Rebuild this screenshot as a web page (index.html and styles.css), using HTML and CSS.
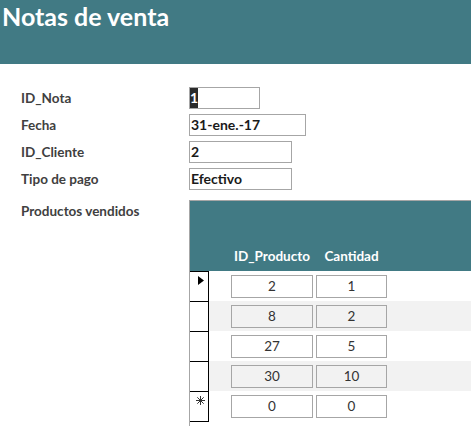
FILE: index.html
```html
<!DOCTYPE html>
<html lang="es">
<head>
<meta charset="utf-8">
<title>Notas de venta</title>
<link rel="stylesheet" href="styles.css">
</head>
<body>
<header class="title-bar">
  <h1 class="title">Notas de venta</h1>
</header>
<main class="form">
  <div class="fields">
    <div class="label">ID_Nota</div>
    <div class="box box-id"><span class="sel">1</span></div>
    <div class="label">Fecha</div>
    <div class="box box-date">31-ene.-17</div>
    <div class="label">ID_Cliente</div>
    <div class="box box-mid">2</div>
    <div class="label">Tipo de pago</div>
    <div class="box box-mid">Efectivo</div>
  </div>
  <div class="sub-row">
    <div class="label sub-label">Productos vendidos</div>
    <div class="subform">
      <div class="sub-head">
        <span class="hcol hcol1">ID_Producto</span>
        <span class="hcol hcol2">Cantidad</span>
      </div>
      <div class="rec">
        <div class="selector">
          <svg class="arrow" width="6" height="9" viewBox="0 0 6 9"><polygon points="0,0 6,4.5 0,9" fill="#000"/></svg>
        </div>
        <div class="cell c1">2</div>
        <div class="cell c2">1</div>
      </div>
      <div class="rec alt">
        <div class="selector"></div>
        <div class="cell c1">8</div>
        <div class="cell c2">2</div>
      </div>
      <div class="rec">
        <div class="selector"></div>
        <div class="cell c1">27</div>
        <div class="cell c2">5</div>
      </div>
      <div class="rec alt">
        <div class="selector"></div>
        <div class="cell c1">30</div>
        <div class="cell c2">10</div>
      </div>
      <div class="rec last">
        <div class="selector">
          <svg class="star" width="9" height="9" viewBox="0 0 9 9"><g stroke="#333" stroke-width="1"><line x1="4.5" y1="0" x2="4.5" y2="9"/><line x1="0" y1="4.5" x2="9" y2="4.5"/><line x1="1.3" y1="1.3" x2="7.7" y2="7.7"/><line x1="7.7" y1="1.3" x2="1.3" y2="7.7"/></g></svg>
        </div>
        <div class="cell c1">0</div>
        <div class="cell c2">0</div>
      </div>
    </div>
  </div>
</main>
</body>
</html>
```
FILE: styles.css
```css
html, body {
  margin: 0;
  padding: 0;
  overflow: hidden;
  background: #fff;
}
body {
  width: 471px;
  font-family: Lato, "Open Sans", sans-serif;
}
.title-bar {
  height: 64px;
  background: #417a84;
  box-sizing: border-box;
  padding: 1px 0 0 2px;
}
.title {
  margin: 0;
  font-size: 25px;
  line-height: 30px;
  font-weight: 700;
  color: #fff;
}
.form {
  padding: 23px 0 0 21px;
}
.fields {
  display: grid;
  grid-template-columns: 168px auto;
  grid-auto-rows: 22px;
  row-gap: 5px;
  justify-items: start;
}
.label {
  font-size: 13.5px;
  line-height: 22px;
  font-weight: 700;
  color: #404040;
}
.box {
  box-sizing: border-box;
  height: 22px;
  border: 1px solid #a6a6a6;
  font-size: 14px;
  line-height: 20px;
  font-weight: 700;
  color: #1a1a1a;
  padding-left: 1px;
  white-space: nowrap;
}
.box-id { width: 71px; padding-left: 0; }
.box-date { width: 117px; }
.box-mid { width: 103px; }
.sel {
  display: inline-block;
  width: 8px;
  height: 20px;
  background: #2b2b2b;
  color: #fff;
  text-align: center;
}
.sub-row {
  display: flex;
  margin-top: 10px;
  align-items: flex-start;
}
.sub-label {
  width: 168px;
  flex: none;
}
.subform {
  width: 300px;
  flex: none;
  border-top: 1px solid #a6a6a6;
  border-left: 1px solid #a6a6a6;
  padding-bottom: 20px;
}
.sub-head {
  height: 70px;
  box-sizing: border-box;
  background: #417a84;
  display: flex;
  align-items: flex-end;
  gap: 3px;
  padding: 0 0 7px 41px;
}
.hcol {
  font-size: 13.5px;
  line-height: 16px;
  font-weight: 700;
  color: #fff;
  text-align: center;
  white-space: nowrap;
}
.hcol1 { width: 82px; }
.hcol2 { width: 71px; }
.rec {
  display: flex;
  align-items: flex-start;
  height: 30px;
  gap: 3px;
}
.rec.alt { background: #f2f2f2; }
.rec.last { height: 31px; }
.selector {
  box-sizing: border-box;
  width: 19px;
  height: 30px;
  background: #fff;
  border-top: 1px solid #000;
  border-right: 1px solid #000;
  margin-right: 19px;
  flex: none;
}
.rec.last .selector {
  height: 31px;
  border-bottom: 1px solid #000;
}
.arrow {
  display: block;
  margin: 4px 0 0 8px;
}
.star {
  display: block;
  margin: 4px 0 0 6px;
}
.cell {
  box-sizing: border-box;
  height: 23px;
  margin-top: 4px;
  border: 1px solid #a6a6a6;
  font-size: 13.5px;
  line-height: 21px;
  text-align: center;
  color: #333;
}
.c1 { width: 82px; }
.c2 { width: 71px; }
```
